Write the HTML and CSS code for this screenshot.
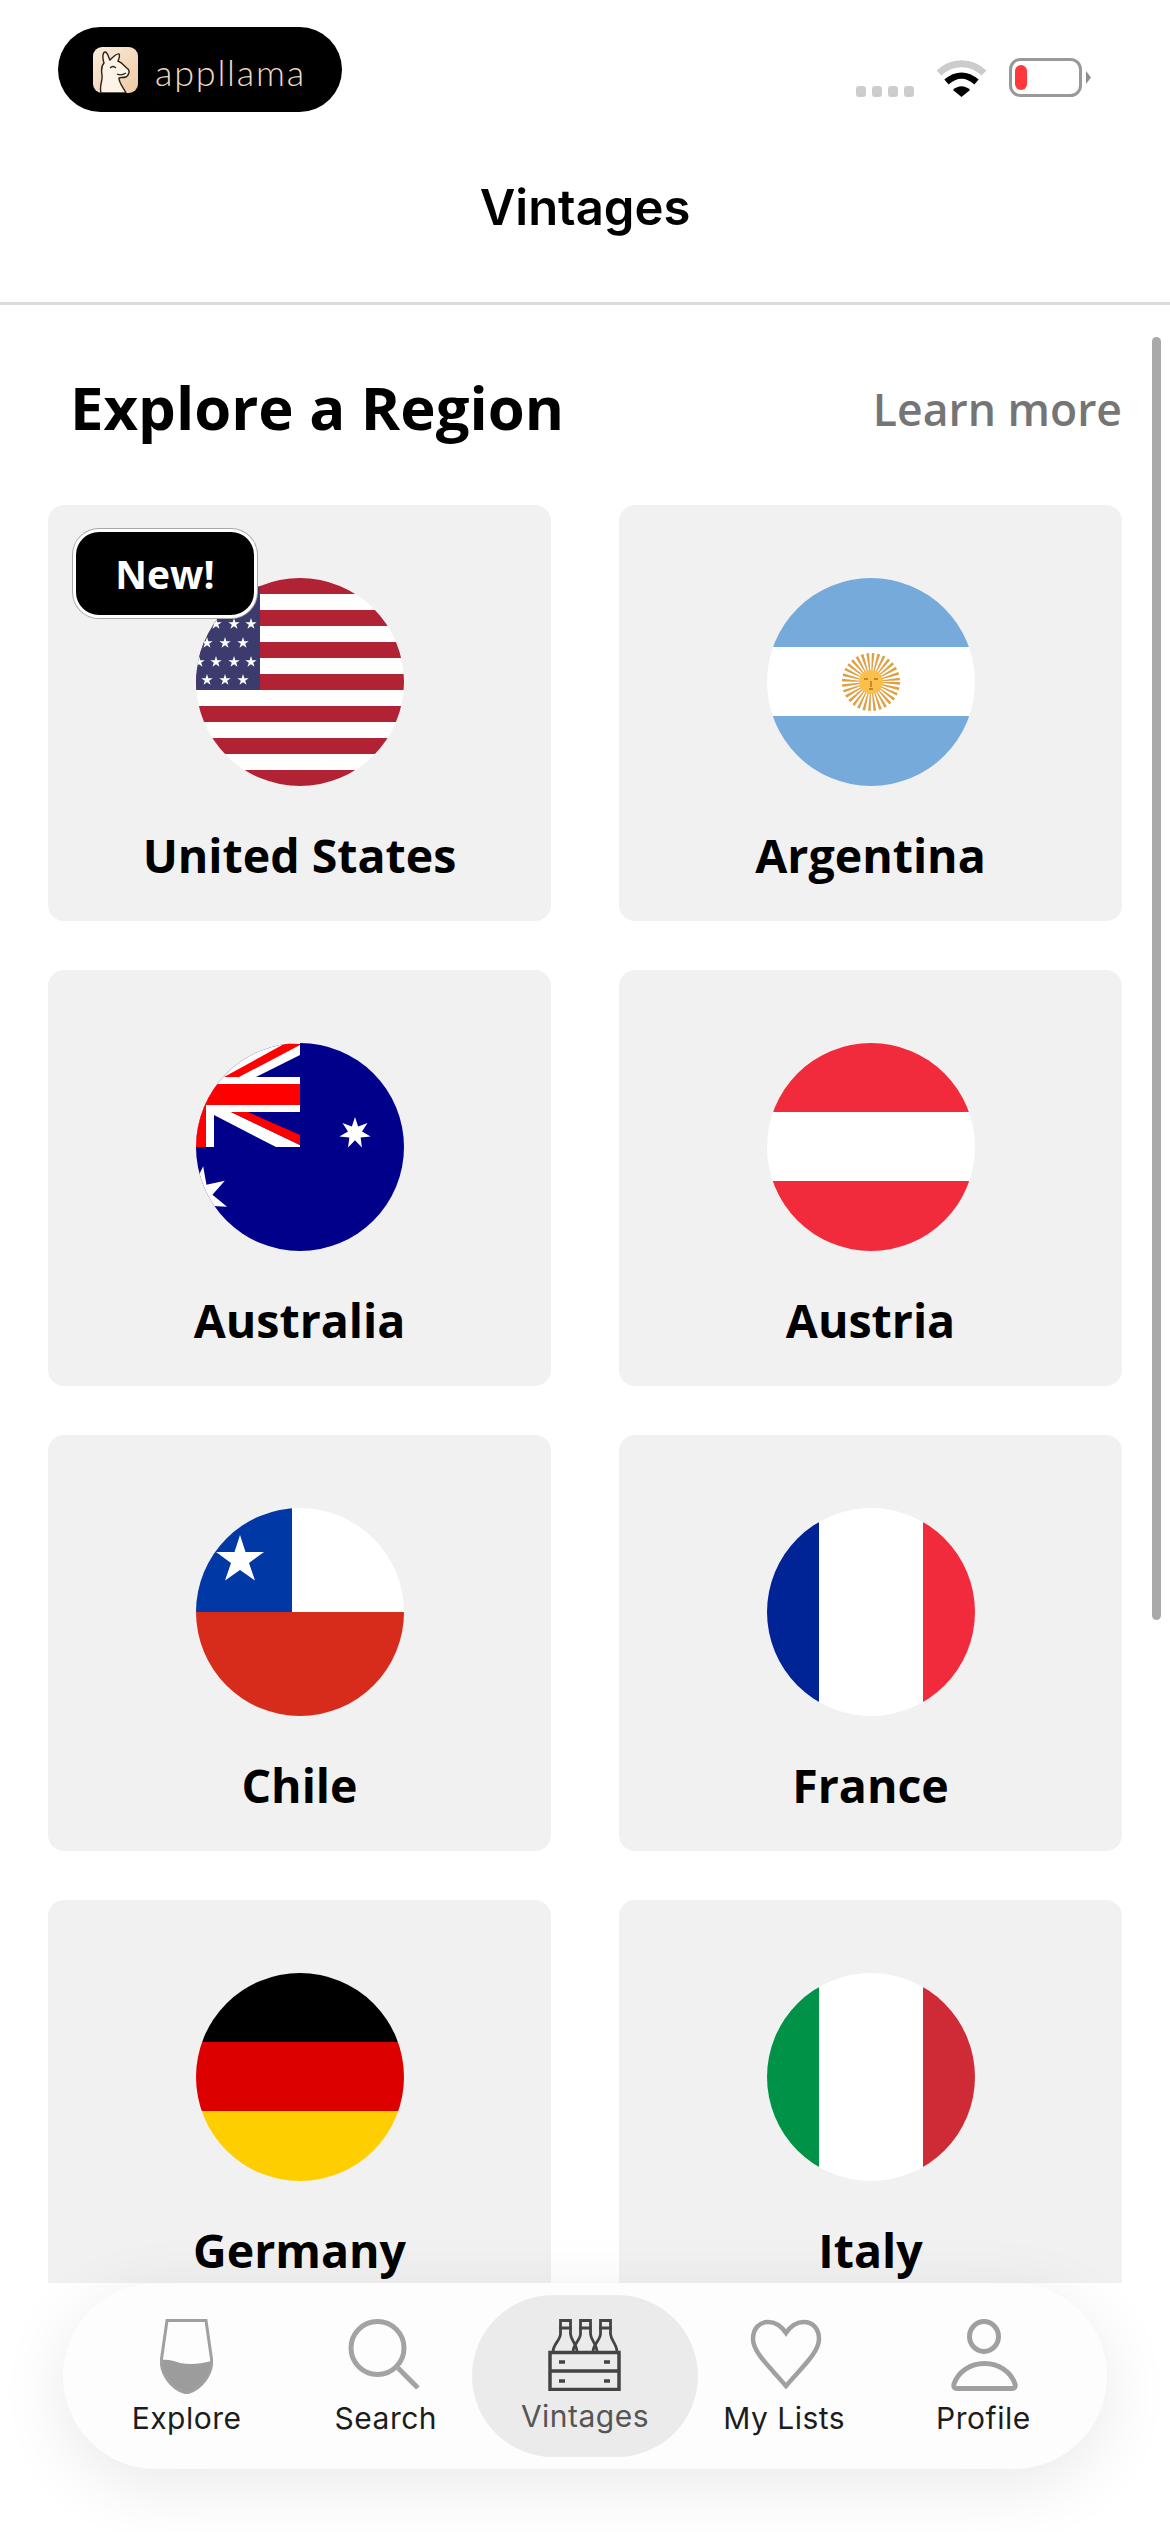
FILE: index.html
```html
<!DOCTYPE html>
<html lang="en">
<head>
<meta charset="utf-8">
<title>Vintages</title>
<link rel="stylesheet" href="styles.css">
</head>
<body>
<div class="screen">
  <header class="header">
    <div class="status">
      <div class="brand">
        <svg class="brand-icon" viewBox="0 0 45 46">
          <defs><linearGradient id="peach" x1="0" y1="0" x2="1" y2="1"><stop offset="0" stop-color="#fbeedd"/><stop offset="1" stop-color="#eec9a4"/></linearGradient></defs>
          <rect width="45" height="46" rx="9" fill="url(#peach)"/>
          <path d="M8 46C6 38 10 34 9 28C8 22 9 18 11 16C9 10 10 5 12 5C15 5 15 10 17 13C20 10 24 6 26 7C27 9 26 12 25 14C30 16 32 20 35 22C37 24 36 28 33 30C30 31 27 30 26 31C26 36 30 40 33 46Z" fill="#fdf3e6" stroke="#2b211a" stroke-width="1.4"/>
          <path d="M17 21Q20 18 23 21M24 27Q28 29 33 26" fill="none" stroke="#2b211a" stroke-width="1.2"/>
        </svg>
        <span class="brand-name">appllama</span>
      </div>
      <div class="status-icons">
        <div class="signal"><i></i><i></i><i></i><i></i></div>
        <svg class="wifi" viewBox="0 0 51 38">
          <path d="M3 14C16 1.500 35 1.500 48 14" fill="none" stroke="#cccccc" stroke-width="7"/>
          <path d="M10.500 23C20 14.500 31 14.500 40.500 23" fill="none" stroke="#000" stroke-width="6.500"/>
          <path d="M17 31C22 26 29 26 34 31L25.500 38Z" fill="#000"/>
        </svg>
        <svg class="battery" viewBox="0 0 82 39">
          <rect x="1.500" y="1.500" width="70" height="36" rx="10" fill="#fff" stroke="#999" stroke-width="3"/>
          <rect x="6" y="7" width="12" height="25" rx="6" fill="#ff383c"/>
          <path d="M77 13L82 19.500L77 26Z" fill="#8e8e8e"/>
        </svg>
      </div>
    </div>
    <h1 class="page-title">Vintages</h1>
  </header>

  <main class="content">
    <div class="section-head">
      <h2 class="section-title">Explore a Region</h2>
      <a class="learn-more">Learn more</a>
    </div>
    <div class="grid">
      <article class="card">
        <span class="badge">New!</span>
        <svg class="flag" viewBox="0 0 208 208">
          <defs><polygon id="s" points="0,-1 .225,-.31 .95,-.31 .363,.118 .588,.81 0,.382 -.588,.81 -.363,.118 -.95,-.31 -.225,-.31" fill="#fff"/></defs>
          <rect width="208" height="208" fill="#fff"/>
          <path d="M0 0H208V16H0ZM0 32H208V48H0ZM0 64H208V80H0ZM0 96H208V112H0ZM0 128H208V144H0ZM0 160H208V176H0ZM0 192H208V208H0Z" fill="#b02234"/>
          <rect width="64" height="112" fill="#3c3b6e"/>
          <use href="#s" transform="translate(3 46) scale(6)"/><use href="#s" transform="translate(20 46) scale(6)"/><use href="#s" transform="translate(38 46) scale(6)"/><use href="#s" transform="translate(55 46) scale(6)"/>
          <use href="#s" transform="translate(11 65) scale(6)"/><use href="#s" transform="translate(29 65) scale(6)"/><use href="#s" transform="translate(47 65) scale(6)"/>
          <use href="#s" transform="translate(3 84) scale(6)"/><use href="#s" transform="translate(20 84) scale(6)"/><use href="#s" transform="translate(38 84) scale(6)"/><use href="#s" transform="translate(55 84) scale(6)"/>
          <use href="#s" transform="translate(11 102) scale(6)"/><use href="#s" transform="translate(29 102) scale(6)"/><use href="#s" transform="translate(47 102) scale(6)"/>
        </svg>
        <h3 class="card-label">United States</h3>
      </article>
      <article class="card">
        <svg class="flag" viewBox="0 0 208 208">
          <rect width="208" height="69" fill="#75aadb"/>
          <rect y="69" width="208" height="69" fill="#fff"/>
          <rect y="138" width="208" height="70" fill="#75aadb"/>
          <circle cx="104" cy="104" r="20" fill="none" stroke="#dfa044" stroke-width="18" stroke-dasharray="1.900 2.027"/>
          <circle cx="104" cy="104" r="12" fill="#fcbf49"/>
          <path d="M97 101h4M107 101h4M104 103v6M102 111h4" stroke="#a8742c" stroke-width="1.400" fill="none"/>
        </svg>
        <h3 class="card-label">Argentina</h3>
      </article>
      <article class="card">
        <svg class="flag" viewBox="0 0 208 208">
          <rect width="208" height="208" fill="#00008b"/>
          <path d="M0 34H104V69H0ZM0 69H18V104H0ZM104 0V12L60 34H20L70 0ZM18 69H35L104 102V104H80L18 72Z" fill="#fff"/>
          <path d="M0 41H104V62H0ZM0 62H10V104H0ZM28 34L88 1H104V2L43 34ZM35 69H52L104 92V102Z" fill="#f00"/>
          <polygon transform="translate(159 90) scale(16)" fill="#fff" points="0,-1 .195,-.405 .782,-.623 .439,-.1 .975,.223 .352,.28 .434,.901 0,.45 -.434,.901 -.352,.28 -.975,.223 -.439,-.1 -.782,-.623 -.195,-.405"/>
          <polygon transform="translate(3 153) rotate(8) scale(30)" fill="#fff" points="0,-1 .195,-.405 .782,-.623 .439,-.1 .975,.223 .352,.28 .434,.901 0,.45 -.434,.901 -.352,.28 -.975,.223 -.439,-.1 -.782,-.623 -.195,-.405"/>
        </svg>
        <h3 class="card-label">Australia</h3>
      </article>
      <article class="card">
        <svg class="flag" viewBox="0 0 208 208">
          <rect width="208" height="69" fill="#f22b3c"/>
          <rect y="69" width="208" height="69" fill="#fff"/>
          <rect y="138" width="208" height="70" fill="#f22b3c"/>
        </svg>
        <h3 class="card-label">Austria</h3>
      </article>
      <article class="card">
        <svg class="flag" viewBox="0 0 208 208">
          <rect y="104" width="208" height="104" fill="#d72b1b"/>
          <rect x="96" width="112" height="104" fill="#fff"/>
          <rect width="96" height="104" fill="#0039a6"/>
          <polygon fill="#fff" points="44,27 49.500,44 68,44 53,55 59,72.500 44,62 29,72.500 35,55 20,44 38.500,44"/>
        </svg>
        <h3 class="card-label">Chile</h3>
      </article>
      <article class="card">
        <svg class="flag" viewBox="0 0 208 208">
          <rect width="208" height="208" fill="#fff"/>
          <rect width="52" height="208" fill="#002395"/>
          <rect x="156" width="52" height="208" fill="#f22b3c"/>
        </svg>
        <h3 class="card-label">France</h3>
      </article>
      <article class="card">
        <svg class="flag" viewBox="0 0 208 208">
          <rect width="208" height="69" fill="#000"/>
          <rect y="69" width="208" height="69" fill="#d00"/>
          <rect y="138" width="208" height="70" fill="#ffce00"/>
        </svg>
        <h3 class="card-label">Germany</h3>
      </article>
      <article class="card">
        <svg class="flag" viewBox="0 0 208 208">
          <rect width="208" height="208" fill="#fff"/>
          <rect width="52" height="208" fill="#009246"/>
          <rect x="156" width="52" height="208" fill="#ce2b37"/>
        </svg>
        <h3 class="card-label">Italy</h3>
      </article>
    </div>
  </main>

  <div class="scrollbar"></div>

  <footer class="footer">
    <nav class="tabbar">
      <a class="tab">
        <svg class="tab-icon glass" viewBox="0 0 53 75">
          <path d="M1.500 41C8 40 14 42 20 44C30 46 40 45 51.500 42C53 55 42 70 26.500 75C11 70 0 55 1.500 41Z" fill="#9c9c9c"/>
          <path d="M7 1.500H46L51.500 40C53 54 42 70 26.500 74C11 70 0 54 1.500 40Z" fill="none" stroke="#a0a0a0" stroke-width="3"/>
        </svg>
        <span class="tab-label">Explore</span>
      </a>
      <a class="tab">
        <svg class="tab-icon search" viewBox="0 0 72 70">
          <circle cx="29.500" cy="29" r="26.500" fill="none" stroke="#a3a3a3" stroke-width="5"/>
          <path d="M50 49L70 69" stroke="#a3a3a3" stroke-width="5" fill="none"/>
        </svg>
        <span class="tab-label">Search</span>
      </a>
      <a class="tab tab-active">
        <svg class="tab-icon crate" viewBox="0 0 73 72">
          <g fill="none" stroke="#444" stroke-width="2.800">
            <path d="M5 33C5 25 12 22 12.500 15V1.500H22.500V15C23 22 29 25 29 33M11 9H24"/>
            <path d="M25 33C25 25 32 22 32.500 15V1.500H42.500V15C43 22 49 25 49 33M31 9H44"/>
            <path d="M45 33C45 25 52 22 52.500 15V1.500H62.500V15C63 22 69 25 69 33M51 9H64"/>
          </g>
          <path d="M2 33.500H71V70.500H2ZM2 52H71" fill="none" stroke="#444" stroke-width="3.500"/>
          <path d="M11 43H17M56 43H62M11 62H17M56 62H62" stroke="#444" stroke-width="3.500" fill="none"/>
        </svg>
        <span class="tab-label">Vintages</span>
      </a>
      <a class="tab">
        <svg class="tab-icon heart" viewBox="0 0 72 70">
          <path d="M36 67C22 50 3 34 3 20C3 9 10 3 18 3C26 3 32 8 36 14C40 8 46 3 54 3C62 3 69 9 69 20C69 34 50 50 36 67Z" fill="none" stroke="#a0a0a0" stroke-width="4.500"/>
        </svg>
        <span class="tab-label">My Lists</span>
      </a>
      <a class="tab">
        <svg class="tab-icon person" viewBox="0 0 67 72">
          <ellipse cx="33" cy="17.500" rx="14.500" ry="15" fill="none" stroke="#a0a0a0" stroke-width="5"/>
          <path d="M6 69.500H61Q65 69.500 64 65C60 53 48 44.500 33.500 44.500C19 44.500 7 53 3 65Q2 69.500 6 69.500Z" fill="none" stroke="#a0a0a0" stroke-width="5"/>
        </svg>
        <span class="tab-label">Profile</span>
      </a>
    </nav>
  </footer>
</div>
</body>
</html>
```

FILE: styles.css
```css
* { box-sizing: border-box; }
html, body { margin: 0; padding: 0; background: #fff; }
.screen { position: relative; width: 1170px; height: 2532px; overflow: hidden; background: #fff; font-family: "Open Sans", sans-serif; color: #000; }

.header { height: 305px; border-bottom: 3px solid #dcdcdc; padding-top: 27px; }
.status { display: flex; justify-content: space-between; align-items: flex-start; padding: 0 79px 0 58px; }
.brand { width: 284px; height: 85px; border-radius: 43px; background: #000; display: flex; align-items: center; padding-left: 35px; gap: 17px; }
.brand-icon { width: 45px; height: 46px; display: block; flex: none; }
.brand-name { font-family: Lato, sans-serif; font-weight: 300; font-size: 36px; letter-spacing: 1.750px; color: #ecdac7; position: relative; top: 2px; }
.status-icons { display: flex; align-items: flex-end; margin-top: 31px; }
.signal { display: flex; gap: 6px; margin-right: 22px; }
.signal i { display: block; width: 10px; height: 11px; border-radius: 3px; background: #cdcdcd; }
.wifi { width: 51px; height: 38px; display: block; margin-right: 22px; }
.battery { width: 82px; height: 39px; display: block; }
.page-title { margin: 66px 0 0; text-align: center; font-family: Inter, sans-serif; font-weight: 600; font-size: 49px; line-height: 60px; color: #000; }

.content { padding: 0 48px; }
.section-head { height: 200px; display: flex; justify-content: space-between; align-items: center; padding: 6px 0 0 22px; }
.section-title { margin: 0; font-size: 59.800px; font-weight: 700; line-height: 1.2; }
.learn-more { font-size: 44.500px; font-weight: 600; color: #757575; }
.grid { display: grid; grid-template-columns: 503px 503px; column-gap: 68px; row-gap: 49px; }
.card { position: relative; height: 416px; border-radius: 16px; background: #f1f1f1; display: flex; flex-direction: column; align-items: center; padding-top: 73px; }
.flag { width: 208px; height: 208px; border-radius: 50%; display: block; flex: none; }
.card-label { margin: 38px 0 0; font-size: 46.500px; font-weight: 700; line-height: 62px; text-align: center; }
.badge { position: absolute; left: 25px; top: 24px; width: 184px; height: 89px; border-radius: 26px; background: #000; border: 3px solid #fff; box-shadow: 0 0 0 1px #a8a8a8; color: #fff; font-size: 39px; font-weight: 700; display: flex; align-items: center; justify-content: center; }

.scrollbar { position: absolute; left: 1152px; top: 337px; width: 9px; height: 1283px; border-radius: 5px; background: #a9a9a9; }

.footer { position: absolute; left: 0; right: 0; top: 2283px; bottom: 0; background: #fff; padding: 0 63px; }
.tabbar { height: 186px; border-radius: 93px; background: #fdfdfd; box-shadow: 0 16px 70px rgba(0,0,0,.09); display: grid; grid-template-columns: repeat(5, 1fr); padding: 12px 24px; }
.tab { position: relative; display: flex; flex-direction: column; align-items: center; height: 162px; padding-top: 24px; color: #1c1c1c; }
.tab-active { margin: 0 -13px; background: #ebebeb; border-radius: 81px; color: #555; }
.tab-icon { display: block; flex: none; }
.glass { width: 53px; height: 75px; }
.search { width: 72px; height: 70px; margin-right: 4px; }
.crate { width: 73px; height: 72px; }
.heart { width: 72px; height: 70px; margin-left: 3px; }
.person { width: 67px; height: 72px; margin-left: 2px; }
.tab-label { position: absolute; top: 105px; font-family: Inter, sans-serif; font-size: 30px; line-height: 36px; font-weight: 400; letter-spacing: .5px; }
.tab-active .tab-label { top: 103px; }
```
